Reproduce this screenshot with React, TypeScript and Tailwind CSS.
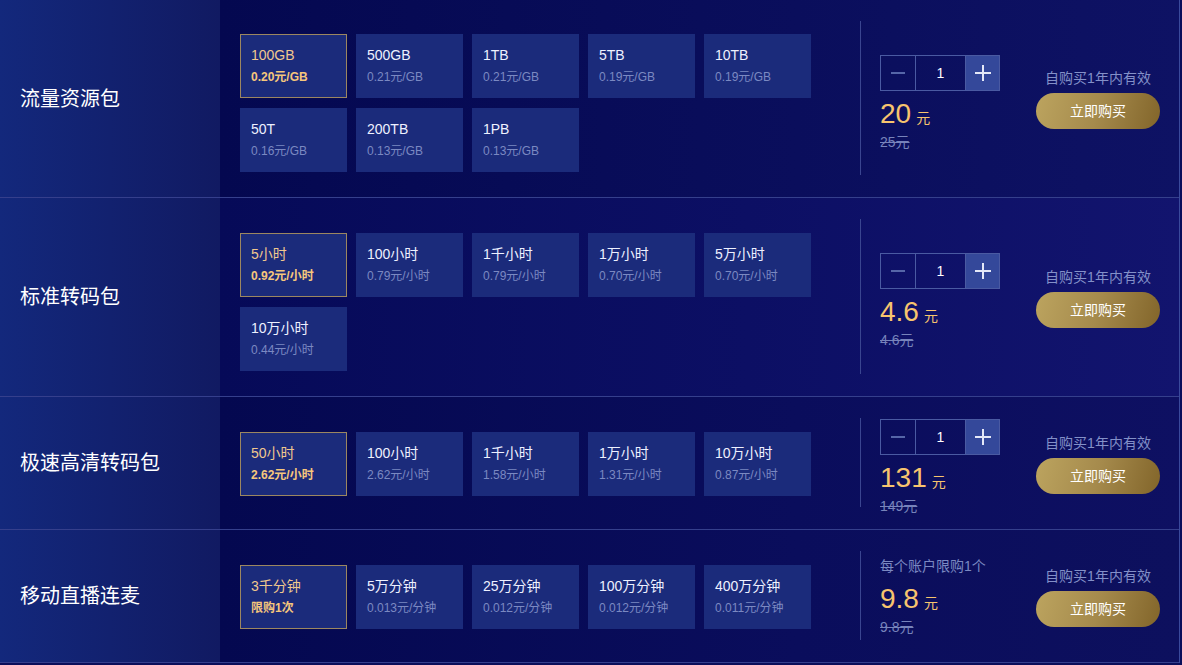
import { useState } from "react";

interface Pack {
  name: string;
  unit: string;
}

interface Row {
  title: string;
  packs: Pack[];
  price: string;
  oldPrice: string;
  limit?: string;
  pad: string;
  bg: string;
}

const rows: Row[] = [
  {
    title: "流量资源包",
    packs: [
      { name: "100GB", unit: "0.20元/GB" },
      { name: "500GB", unit: "0.21元/GB" },
      { name: "1TB", unit: "0.21元/GB" },
      { name: "5TB", unit: "0.19元/GB" },
      { name: "10TB", unit: "0.19元/GB" },
      { name: "50T", unit: "0.16元/GB" },
      { name: "200TB", unit: "0.13元/GB" },
      { name: "1PB", unit: "0.13元/GB" },
    ],
    price: "20",
    oldPrice: "25元",
    pad: "pt-[34px] pb-[25px]",
    bg: "bg-[linear-gradient(90deg,#040850,#0a0e5c_60%,#0e1264)]",
  },
  {
    title: "标准转码包",
    packs: [
      { name: "5小时", unit: "0.92元/小时" },
      { name: "100小时", unit: "0.79元/小时" },
      { name: "1千小时", unit: "0.79元/小时" },
      { name: "1万小时", unit: "0.70元/小时" },
      { name: "5万小时", unit: "0.70元/小时" },
      { name: "10万小时", unit: "0.44元/小时" },
    ],
    price: "4.6",
    oldPrice: "4.6元",
    pad: "pt-[35px] pb-[25px]",
    bg: "bg-[linear-gradient(90deg,#060a58,#0c0f64_55%,#12146e)]",
  },
  {
    title: "极速高清转码包",
    packs: [
      { name: "50小时", unit: "2.62元/小时" },
      { name: "100小时", unit: "2.62元/小时" },
      { name: "1千小时", unit: "1.58元/小时" },
      { name: "1万小时", unit: "1.31元/小时" },
      { name: "10万小时", unit: "0.87元/小时" },
    ],
    price: "131",
    oldPrice: "149元",
    pad: "pt-[35px] pb-[33px]",
    bg: "bg-[linear-gradient(90deg,#040850,#0a0d5c_60%,#0e1062)]",
  },
  {
    title: "移动直播连麦",
    packs: [
      { name: "3千分钟", unit: "限购1次" },
      { name: "5万分钟", unit: "0.013元/分钟" },
      { name: "25万分钟", unit: "0.012元/分钟" },
      { name: "100万分钟", unit: "0.012元/分钟" },
      { name: "400万分钟", unit: "0.011元/分钟" },
    ],
    price: "9.8",
    oldPrice: "9.8元",
    limit: "每个账户限购1个",
    pad: "pt-[35px] pb-[33px]",
    bg: "bg-[linear-gradient(90deg,#040850,#0a0d5c_60%,#0d105e)]",
  },
];

function PackRow({ row }: { row: Row }) {
  const [selected, setSelected] = useState(0);
  const [count, setCount] = useState(1);

  return (
    <div className="flex border-b border-[#353f8c]">
      {/* Title */}
      <div className="w-[220px] shrink-0 flex items-center pl-5 bg-[linear-gradient(90deg,#13287c,#111a62)]">
        <h2 className="text-[20px] text-white">{row.title}</h2>
      </div>

      <div className={`flex-1 flex ${row.bg}`}>
        {/* Packs */}
        <div className={`w-[640px] shrink-0 pl-5 ${row.pad}`}>
          <div className="grid grid-cols-[repeat(5,107px)] gap-x-[9px] gap-y-[10px]">
            {row.packs.map((p, i) => {
              const on = i === selected;
              return (
                <div
                  key={p.name}
                  onClick={() => setSelected(i)}
                  className={`h-16 cursor-pointer pl-[10px] pt-[10px] bg-[#1b2b7b] border ${
                    on ? "border-[#9c8760]" : "border-[#1b2b7b]"
                  }`}
                >
                  <div className={`text-sm leading-5 ${on ? "text-[#f0c88e]" : "text-[#eef1ff]"}`}>
                    {p.name}
                  </div>
                  <div
                    className={`mt-[3px] text-xs leading-[18px] ${
                      on ? "text-[#f6c77c] font-semibold" : "text-[#7b89c2]"
                    }`}
                  >
                    {p.unit}
                  </div>
                </div>
              );
            })}
          </div>
        </div>

        <div className="w-px bg-[#3a4590] self-stretch mt-[21px] mb-[22px]" />

        {/* Price */}
        <div className={`flex flex-col justify-center pl-[19px] ${row.limit ? "" : "pt-[9px]"}`}>
          {row.limit ? (
            <div className="text-sm leading-5 text-[#7b89c2]">{row.limit}</div>
          ) : (
            <div className="flex h-9 w-[120px] border border-[#4a5aa2]">
              <button
                onClick={() => setCount(Math.max(1, count - 1))}
                className="w-[35px] flex items-center justify-center border-r border-[#4a5aa2]"
              >
                <span className="block w-[14px] h-[2px] bg-[#5666a8]" />
              </button>
              <div className="w-[49px] flex items-center justify-center text-sm text-white">{count}</div>
              <button
                onClick={() => setCount(count + 1)}
                className="flex-1 relative bg-[#34489a] border-l border-[#4a5aa2]"
              >
                <span className="absolute left-1/2 top-1/2 w-4 h-[2px] -translate-x-1/2 -translate-y-1/2 bg-[#e4e8f8]" />
                <span className="absolute left-1/2 top-1/2 w-[2px] h-4 -translate-x-1/2 -translate-y-1/2 bg-[#e4e8f8]" />
              </button>
            </div>
          )}
          <div className="mt-[7px] flex items-baseline text-[#f7c46e] leading-8">
            <span className="text-[28px]">{row.price}</span>
            <span className="ml-[5px] text-sm">元</span>
          </div>
          <div className="mt-[2px] text-sm leading-5 text-[#7783bb] line-through">{row.oldPrice}</div>
        </div>

        {/* Action */}
        <div className="ml-auto mr-[19px] w-[124px] flex flex-col items-center justify-center">
          <div className="text-sm leading-5 text-[#8390c8] whitespace-nowrap">自购买1年内有效</div>
          <button className="mt-[5px] w-[124px] h-9 rounded-full text-sm text-white bg-[linear-gradient(105deg,#bca45f,#a58a4c_50%,#82652a)]">
            立即购买
          </button>
        </div>
      </div>
    </div>
  );
}

export default function App() {
  return (
    <div
      className="w-[1182px] h-[665px] overflow-hidden bg-[#0a0e5a]"
      style={{ fontFamily: '"Liberation Sans", "Noto Sans CJK SC", sans-serif' }}
    >
      <div className="w-[1180px] border-r border-[#3a4a9c]">
        {rows.map((r) => (
          <PackRow key={r.title} row={r} />
        ))}
      </div>
    </div>
  );
}
